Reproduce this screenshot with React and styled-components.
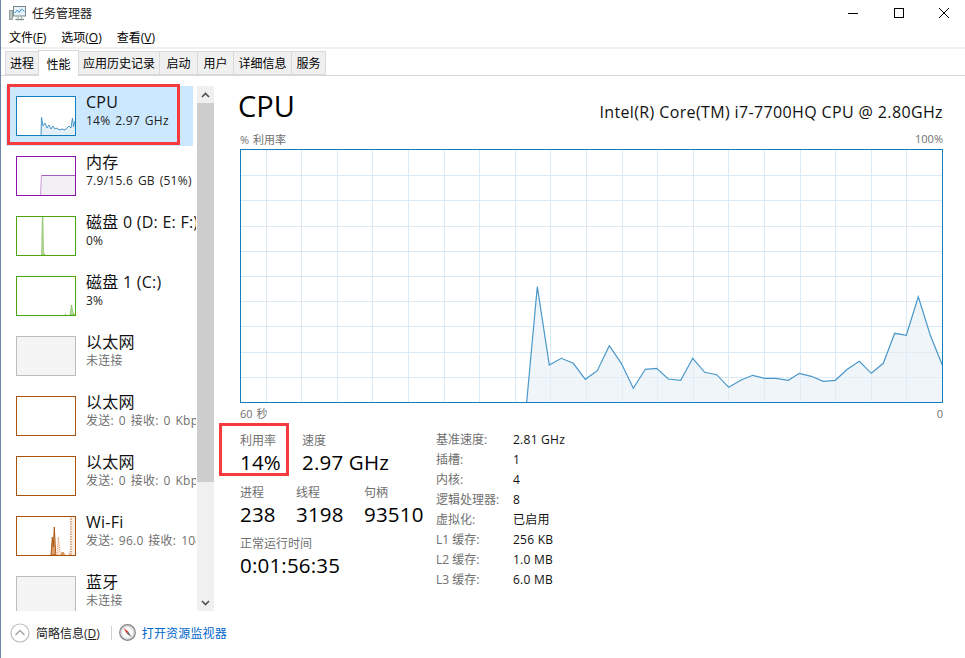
import React from "react";
import styled, { createGlobalStyle } from "styled-components";

const FONT = `"Open Sans", "Noto Sans CJK SC", sans-serif`;

const Global = createGlobalStyle`
  html, body { margin: 0; padding: 0; background: #fff; }
  body { font-family: ${FONT}; color: #000; overflow: hidden; }
  * { box-sizing: border-box; }
`;

const Window = styled.div`
  width: 965px;
  height: 658px;
  position: relative;
  background: #fff;
  border-left: 1px solid #6f86a8;
  display: flex;
  flex-direction: column;
  overflow: hidden;
`;

const TitleBar = styled.div`
  height: 26px;
  display: flex;
  align-items: center;
  padding-left: 8px;
  gap: 6px;
  font-size: 12px;
  color: #222;
`;

const WinControls = styled.div`
  margin-left: auto;
  margin-right: -2px;
  display: flex;
`;

const WinBtn = styled.div`
  width: 45.5px;
  height: 26px;
  display: flex;
  align-items: center;
  justify-content: center;
`;

const MenuBar = styled.div`
  height: 23px;
  display: flex;
  align-items: center;
  gap: 15px;
  padding-left: 8px;
  font-size: 12px;
  border-bottom: 2px solid #f0f0f0;
`;

const TabStrip = styled.div`
  height: 27px;
  display: flex;
  align-items: flex-end;
  padding-left: 4px;
  border-bottom: 1px solid #d9d9d9;
`;

const Tab = styled.div`
  width: ${({ $w }) => $w}px;
  height: ${({ $active }) => ($active ? "26px" : "24px")};
  margin-bottom: ${({ $active }) => ($active ? "-1px" : "0")};
  display: flex;
  align-items: center;
  justify-content: center;
  font-size: 12px;
  background: ${({ $active }) => ($active ? "#fff" : "#f0f0f0")};
  border: 1px solid #d9d9d9;
  border-bottom: ${({ $active }) => ($active ? "none" : "1px solid #d9d9d9")};
  margin-right: -1px;
  position: relative;
  z-index: ${({ $active }) => ($active ? 1 : 0)};
`;

const Body = styled.div`
  flex: 1;
  display: flex;
  min-height: 0;
  padding-top: 10px;
`;

const SidePane = styled.div`
  width: 213px;
  height: 525px;
  display: flex;
  flex-shrink: 0;
`;

const SideList = styled.div`
  width: 196px;
  overflow: hidden;
  display: flex;
  flex-direction: column;
`;

const SideItem = styled.div`
  height: 60px;
  flex-shrink: 0;
  padding-top: 10px;
  display: flex;
  gap: 10px;
  background: ${({ $selected }) => ($selected ? "#cce8ff" : "transparent")};
  margin-left: ${({ $selected }) => ($selected ? "5px" : "0")};
  margin-right: ${({ $selected }) => ($selected ? "3px" : "0")};
  padding-left: ${({ $selected }) => ($selected ? "10px" : "15px")};
`;

const Thumb = styled.div`
  width: 60px;
  height: 40px;
  flex-shrink: 0;
  border: 1px solid ${({ $color }) => $color};
  background: ${({ $bg }) => $bg || "#fff"};
  overflow: hidden;
  svg { display: block; }
`;

const SideText = styled.div`
  white-space: nowrap;
  display: flex;
  flex-direction: column;
  margin-top: -5px;
`;

const SideTitle = styled.div`
  font-size: 16px;
  line-height: 22px;
  letter-spacing: 0.25px;
  color: #111;
`;

const SideSub = styled.div`
  font-size: 12px;
  line-height: 16px;
  letter-spacing: 0.25px;
  word-spacing: 1.5px;
  color: ${({ $muted }) => ($muted ? "#707070" : "#222")};
`;

const ScrollBar = styled.div`
  width: 17px;
  margin-left: 1px;
  background: #f0f0f0;
  display: flex;
  flex-direction: column;
`;

const ScrollArrow = styled.div`
  height: 17px;
  display: flex;
  align-items: center;
  justify-content: center;
  flex-shrink: 0;
`;

const ScrollThumb = styled.div`
  height: 379px;
  background: #cdcdcd;
`;

const ScrollRest = styled.div`
  flex: 1;
`;

const Main = styled.div`
  flex: 1;
  padding: 0 22px 0 26px;
  display: flex;
  flex-direction: column;
`;

const HeadRow = styled.div`
  height: 42px;
  display: flex;
  align-items: center;
  justify-content: space-between;
`;

const BigTitle = styled.div`
  font-size: 29px;
  line-height: 36px;
  color: #000;
  margin-left: -2px;
  margin-top: -2px;
`;

const CpuName = styled.div`
  font-size: 16px;
  letter-spacing: 0.37px;
  color: #111;
  margin-top: 10px;
`;

const AxisRow = styled.div`
  height: ${({ $h }) => $h}px;
  display: flex;
  justify-content: space-between;
  align-items: center;
  font-size: 11px;
  word-spacing: 1px;
  color: #707070;
`;

const ChartBox = styled.div`
  width: 703px;
  height: 254px;
  svg { display: block; }
`;

const Stats = styled.div`
  display: flex;
  margin-top: 9px;
  height: 170px;
`;

const StatLeft = styled.div`
  width: 196px;
  display: flex;
  flex-direction: column;
`;

const StatRow = styled.div`
  display: flex;
  height: ${({ $h }) => $h}px;
`;

const Stat = styled.div`
  width: ${({ $w }) => ($w ? `${$w}px` : "auto")};
  white-space: nowrap;
`;

const StatLabel = styled.div`
  font-size: 12px;
  line-height: 18px;
  color: #707070;
`;

const StatValue = styled.div`
  font-size: 20.5px;
  line-height: 26px;
  letter-spacing: 0.2px;
  margin-top: -1px;
  color: #000;
`;

const Specs = styled.div`
  display: grid;
  grid-template-columns: 77px auto;
  grid-auto-rows: 20px;
  align-items: center;
  font-size: 12px;
  margin-top: -3px;
`;

const SpecKey = styled.div`
  color: #707070;
`;

const SpecVal = styled.div`
  color: #111;
  letter-spacing: 0.25px;
`;

const Footer = styled.div`
  position: absolute;
  left: 0;
  right: 0;
  bottom: 0;
  height: 47px;
  display: flex;
  align-items: center;
  padding: 0 0 4px 9px;
  font-size: 12px;
  color: #222;
`;

const Collapse = styled.div`
  display: flex;
  align-items: center;
  gap: 6px;
`;

const Sep = styled.div`
  width: 1px;
  height: 14px;
  background: #d0d0d0;
  margin: 0 7px 0 11px;
`;

const MonitorLink = styled.div`
  color: #0066cc;
  margin-left: 6px;
  letter-spacing: 0.15px;
`;

const RedBox = styled.div`
  position: absolute;
  left: ${({ $x }) => $x}px;
  top: ${({ $y }) => $y}px;
  width: ${({ $w }) => $w}px;
  height: ${({ $h }) => $h}px;
  border: 3px solid #f63a3e;
  pointer-events: none;
`;

const U = styled.span`
  text-decoration: underline;
`;

const CPU_PTS = [
  [526.7, 402], [537.3, 286.7], [549.3, 365], [561.3, 358.3], [573.3, 363.3], [585.3, 379.3],
  [597.3, 370.7], [609.3, 345.7], [621.3, 363.3], [633.3, 388.3], [645.3, 369.3], [656.7, 368.3],
  [668.3, 379], [680.7, 380.3], [692.7, 358.3], [704.7, 372.3], [716.7, 374.7], [728.7, 387.3],
  [740.7, 380.3], [752.7, 375.3], [764.3, 378.3], [776, 378.3], [788.3, 380.3], [799.3, 373.3],
  [811.3, 376.3], [823.3, 381.3], [835.3, 380.3], [847.3, 369.3], [859.3, 361.3], [871.3, 373.3],
  [883.3, 363.3], [894.7, 333.3], [906.3, 335.3], [918.3, 296.7], [930.3, 335.3], [942.3, 365],
];

const CpuChart = () => {
  // reference coords are page pixels, chart box starts at 240,149
  const pts = CPU_PTS.map(([x, y]) => `${(x - 240).toFixed(1)},${(y - 149).toFixed(1)}`);
  const hLines = [];
  for (let i = 1; i < 10; i++) hLines.push(1 + i * 25.2);
  const vLines = [];
  for (let x = 906.4 - 240; x > 0; x -= 35.6) vLines.push(x);
  return (
    <svg width="703" height="254" viewBox="0 0 703 254">
      {hLines.map((y) => (
        <line key={y} x1="0" x2="703" y1={Math.round(y) + 0.5} y2={Math.round(y) + 0.5} stroke="#d9eaf4" />
      ))}
      {vLines.map((x) => (
        <line key={x} y1="0" y2="254" x1={Math.round(x) + 0.5} x2={Math.round(x) + 0.5} stroke="#d9eaf4" />
      ))}
      <polygon points={`286.7,253 ${pts.join(" ")} 702,253`} fill="#e6eff7" fillOpacity="0.6" />
      <polyline points={pts.join(" ")} fill="none" stroke="#4a98c9" strokeWidth="1.2" />
      <rect x="0.5" y="0.5" width="702" height="253" fill="none" stroke="#117dbb" />
    </svg>
  );
};

const CPU_THUMB = "M24 38 L24.5 20 L26 29 L28 26 L30 31 L32 28 L34 32 L36 29 L38 32 L40 31 L42 33 L45 32 L48 33 L50 31 L52 29 L54 31 L55.5 21 L56.5 30 L58 24";

const CpuThumb = () => (
  <svg width="58" height="38" viewBox="0 0 58 38">
    <path d={`${CPU_THUMB} L58 38 Z`} fill="#e3f0f8" />
    <path d={CPU_THUMB} fill="none" stroke="#4a98c9" strokeWidth="1" />
  </svg>
);

const MemThumb = () => (
  <svg width="58" height="38" viewBox="0 0 58 38">
    <path d="M23.5 38 L24.5 18.5 L58 18.5 L58 38 Z" fill="#f3f0f5" />
    <path d="M23.5 38 L24.5 18.5" fill="none" stroke="#d3a8e0" strokeWidth="1.2" />
    <path d="M24.5 18.5 L58 18.5" fill="none" stroke="#a55bc0" strokeWidth="1" />
  </svg>
);

const Disk0Thumb = () => (
  <svg width="58" height="38" viewBox="0 0 58 38">
    <path d="M24.5 38 L25.3 0 L25.9 0 L26.5 35 L28 38 Z" fill="#b5d99b" stroke="#7dbb52" strokeWidth="0.6" />
  </svg>
);

const Disk1Thumb = () => (
  <svg width="58" height="38" viewBox="0 0 58 38">
    <path d="M48 38 L48.5 36.5 L49 38 Z" fill="#6db33f" stroke="#a8d388" strokeWidth="0.6" />
    <path d="M53 38 L54.5 28 L56 36 L58 38 Z" fill="#b5d99b" stroke="#7dbb52" strokeWidth="0.7" />
  </svg>
);

const WifiThumb = () => (
  <svg width="58" height="38" viewBox="0 0 58 38">
    <rect x="55" y="0" width="3" height="38" fill="#fdeee3" />
    <path d="M34 38 L35.3 20 L36.3 30 L37.3 10 L38.8 38 Z" fill="#d89a66" stroke="#a7520d" strokeWidth="0.9" />
    <path d="M39.8 38 L41.3 20 L43.5 38" fill="#fde4d4" stroke="#ec9d72" strokeWidth="1" strokeDasharray="1 1" />
    <path d="M43.5 38 L44.5 35 L47 35 L48 38 Z" fill="#d89a66" />
    <path d="M51.5 38 L52.3 33 L53 38" fill="#e8b48e" />
    <path d="M54 38 L54 0" fill="none" stroke="#b8601f" strokeWidth="1.1" strokeDasharray="1.5 1" />
  </svg>
);

const AppIcon = () => (
  <svg width="17" height="18" viewBox="0 0 17 18">
    <rect x="0.5" y="6.5" width="3" height="9" fill="#b9c7c2" stroke="#7f8f8a" strokeWidth="0.8" />
    <rect x="4.5" y="2.5" width="12" height="9.5" fill="#e8f3f9" stroke="#76868c" />
    <path d="M6 9 L8.2 6 L10.2 8.5 L12.5 5 L15.5 7.5" fill="none" stroke="#3f9ad0" strokeWidth="1" />
    <path d="M9 12.5 L9 14.5 M12.5 12.5 L12.5 14.5" stroke="#9aa6a2" strokeWidth="1.2" />
    <path d="M6.5 15.5 L15 15.5" stroke="#7f8f8a" strokeWidth="1.4" />
  </svg>
);

const CollapseIcon = () => (
  <svg width="20" height="20" viewBox="0 0 20 20">
    <circle cx="10" cy="10" r="9" fill="#fff" stroke="#bdbdbd" strokeWidth="1.2" />
    <path d="M5.5 12 L10 7.5 L14.5 12" fill="none" stroke="#9a9a9a" strokeWidth="1.2" />
  </svg>
);

const MonitorIcon = () => (
  <svg width="17" height="17" viewBox="0 0 17 17">
    <circle cx="8.5" cy="8.5" r="7.8" fill="#dedede" stroke="#858585" strokeWidth="1.2" />
    <circle cx="8.5" cy="8.5" r="5.4" fill="#fbfbfb" />
    <path d="M4.5 3.8 L9.4 7.7 L7.7 9.4 Z" fill="#d4312c" />
    <path d="M12.5 13.2 L7.7 9.4 L9.4 7.7 Z" fill="#666" />
  </svg>
);

const Chevron = ({ up }) => (
  <svg width="9" height="6" viewBox="0 0 9 6">
    <path d={up ? "M1 5 L4.5 1.5 L8 5" : "M1 1 L4.5 4.5 L8 1"} fill="none" stroke="#505050" strokeWidth="1.6" />
  </svg>
);

const TABS = [
  ["进程", 34], ["性能", 41], ["应用历史记录", 82], ["启动", 39],
  ["用户", 37], ["详细信息", 59], ["服务", 35],
];

const ITEMS = [
  { title: "CPU", sub: "14% 2.97 GHz", color: "#117dbb", selected: true, chart: <CpuThumb /> },
  { title: "内存", sub: "7.9/15.6 GB (51%)", color: "#8b12ae", chart: <MemThumb /> },
  { title: "磁盘 0 (D: E: F:)", sub: "0%", color: "#4da60c", chart: <Disk0Thumb /> },
  { title: "磁盘 1 (C:)", sub: "3%", color: "#4da60c", chart: <Disk1Thumb /> },
  { title: "以太网", sub: "未连接", color: "#bcbcbc", bg: "#f4f4f4", muted: true },
  { title: "以太网", sub: "发送: 0 接收: 0 Kbps", color: "#a7520d", muted: true },
  { title: "以太网", sub: "发送: 0 接收: 0 Kbps", color: "#a7520d", muted: true },
  { title: "Wi-Fi", sub: "发送: 96.0 接收: 104 Kbps", color: "#a7520d", muted: true, chart: <WifiThumb /> },
  { title: "蓝牙", sub: "未连接", color: "#bcbcbc", bg: "#f4f4f4", muted: true },
];

const SPECS = [
  ["基准速度:", "2.81 GHz"], ["插槽:", "1"], ["内核:", "4"], ["逻辑处理器:", "8"],
  ["虚拟化:", "已启用"], ["L1 缓存:", "256 KB"], ["L2 缓存:", "1.0 MB"], ["L3 缓存:", "6.0 MB"],
];

const App = () => (
  <>
    <Global />
    <Window>
      <TitleBar>
        <AppIcon />
        <span>任务管理器</span>
        <WinControls>
          <WinBtn>
            <svg width="10" height="10" viewBox="0 0 10 10"><path d="M0 5.5 H10" stroke="#000" /></svg>
          </WinBtn>
          <WinBtn>
            <svg width="10" height="10" viewBox="0 0 10 10"><rect x="0.5" y="0.5" width="9" height="9" fill="none" stroke="#000" /></svg>
          </WinBtn>
          <WinBtn>
            <svg width="10" height="10" viewBox="0 0 10 10"><path d="M0 0 L10 10 M10 0 L0 10" stroke="#000" /></svg>
          </WinBtn>
        </WinControls>
      </TitleBar>
      <MenuBar>
        <span>文件(<U>F</U>)</span>
        <span>选项(<U>O</U>)</span>
        <span>查看(<U>V</U>)</span>
      </MenuBar>
      <TabStrip>
        {TABS.map(([label, w], i) => (
          <Tab key={label} $w={w} $active={i === 1}>{label}</Tab>
        ))}
      </TabStrip>
      <Body>
        <SidePane>
          <SideList>
            {ITEMS.map((item, i) => (
              <SideItem key={i} $selected={item.selected}>
                <Thumb $color={item.color} $bg={item.bg}>{item.chart}</Thumb>
                <SideText>
                  <SideTitle>{item.title}</SideTitle>
                  <SideSub $muted={item.muted}>{item.sub}</SideSub>
                </SideText>
              </SideItem>
            ))}
          </SideList>
          <ScrollBar>
            <ScrollArrow><Chevron up /></ScrollArrow>
            <ScrollThumb />
            <ScrollRest />
            <ScrollArrow><Chevron /></ScrollArrow>
          </ScrollBar>
        </SidePane>
        <Main>
          <HeadRow>
            <BigTitle>CPU</BigTitle>
            <CpuName>Intel(R) Core(TM) i7-7700HQ CPU @ 2.80GHz</CpuName>
          </HeadRow>
          <AxisRow $h={21}><span>% 利用率</span><span>100%</span></AxisRow>
          <ChartBox><CpuChart /></ChartBox>
          <AxisRow $h={20}><span>60 秒</span><span>0</span></AxisRow>
          <Stats>
            <StatLeft>
              <StatRow $h={52}>
                <Stat $w={62}>
                  <StatLabel>利用率</StatLabel>
                  <StatValue>14%</StatValue>
                </Stat>
                <Stat>
                  <StatLabel>速度</StatLabel>
                  <StatValue>2.97 GHz</StatValue>
                </Stat>
              </StatRow>
              <StatRow $h={51}>
                <Stat $w={56}>
                  <StatLabel>进程</StatLabel>
                  <StatValue>238</StatValue>
                </Stat>
                <Stat $w={68}>
                  <StatLabel>线程</StatLabel>
                  <StatValue>3198</StatValue>
                </Stat>
                <Stat>
                  <StatLabel>句柄</StatLabel>
                  <StatValue>93510</StatValue>
                </Stat>
              </StatRow>
              <StatRow $h={50}>
                <Stat>
                  <StatLabel>正常运行时间</StatLabel>
                  <StatValue>0:01:56:35</StatValue>
                </Stat>
              </StatRow>
            </StatLeft>
            <Specs>
              {SPECS.map(([k, v]) => (
                <React.Fragment key={k}>
                  <SpecKey>{k}</SpecKey>
                  <SpecVal>{v}</SpecVal>
                </React.Fragment>
              ))}
            </Specs>
          </Stats>
        </Main>
      </Body>
      <RedBox $x={6} $y={84} $w={173} $h={61} />
      <RedBox $x={218} $y={423} $w={70} $h={53} />
      <Footer>
        <Collapse>
          <CollapseIcon />
          <span>简略信息(<U>D</U>)</span>
        </Collapse>
        <Sep />
        <MonitorIcon />
        <MonitorLink>打开资源监视器</MonitorLink>
      </Footer>
    </Window>
  </>
);

export default App;
